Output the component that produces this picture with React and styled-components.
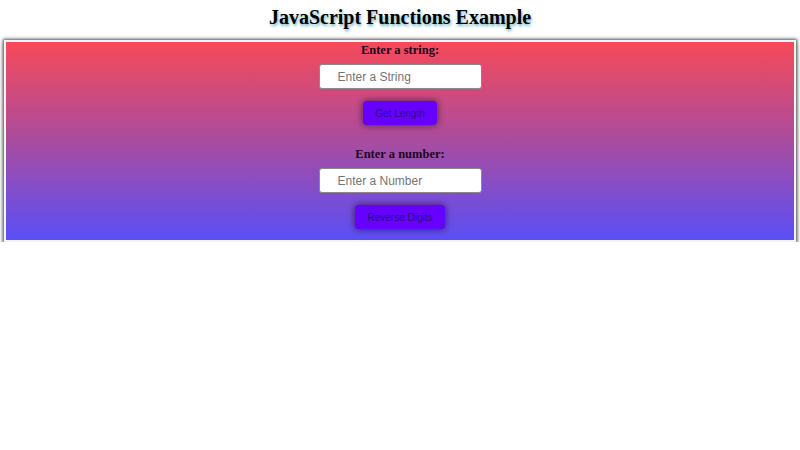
import React from "react";
import styled, { createGlobalStyle } from "styled-components";

const Global = createGlobalStyle`
  html, body { margin: 0; padding: 0; background: #fff; }
  body { font-family: "Liberation Serif", "Times New Roman", serif; }
`;

const Title = styled.h1`
  margin: 0;
  padding-top: 4px;
  height: 32px;
  text-align: center;
  font-size: 20px;
  font-weight: bold;
  line-height: 26px;
  color: #000;
  text-shadow: 1px 2px 3px rgba(30, 140, 160, 0.65);
`;

const Panel = styled.div`
  margin: 4px 4px 0;
  border: 2px solid #f4f4f4;
  box-shadow: 0 0 3px 1px #555, 0 3px 6px rgba(0, 0, 0, 0.35);
  background: linear-gradient(to bottom, #f64a58, #a94c9f 50%, #5a4ff6);
  padding: 1px 0 11px;
  display: flex;
  flex-direction: column;
  align-items: center;
`;

const Group = styled.div`
  display: flex;
  flex-direction: column;
  align-items: center;
  margin-top: ${(p) => p.$gap || 0}px;
`;

const Label = styled.label`
  font-size: 12.5px;
  font-weight: bold;
  line-height: 14px;
  color: #1e0620;
`;

const Input = styled.input`
  box-sizing: border-box;
  margin-top: 7px;
  width: 163px;
  height: 25px;
  border: 1px solid #8a8a8a;
  border-radius: 3px;
  padding: 0 0 0 18px;
  font-family: "Liberation Sans", Arial, sans-serif;
  font-size: 12px;
  background: #fff;
  outline: none;
  &::placeholder { color: #757575; }
`;

const Button = styled.button`
  margin-top: 12px;
  width: ${(p) => p.$w}px;
  height: 24px;
  padding: 0;
  border: none;
  border-radius: 4px;
  background: #6600ff;
  color: #2a1080;
  font-family: "Liberation Sans", Arial, sans-serif;
  font-size: 10px;
  box-shadow: 0 0 6px 1px rgba(30, 0, 50, 0.55);
  cursor: pointer;
`;

export default function App() {
  return (
    <>
      <Global />
      <Title>JavaScript Functions Example</Title>
      <Panel>
        <Group>
          <Label htmlFor="str">Enter a string:</Label>
          <Input id="str" placeholder="Enter a String" />
          <Button $w={74}>Get Length</Button>
        </Group>
        <Group $gap={22}>
          <Label htmlFor="num">Enter a number:</Label>
          <Input id="num" placeholder="Enter a Number" />
          <Button $w={90}>Reverse Digits</Button>
        </Group>
      </Panel>
    </>
  );
}
